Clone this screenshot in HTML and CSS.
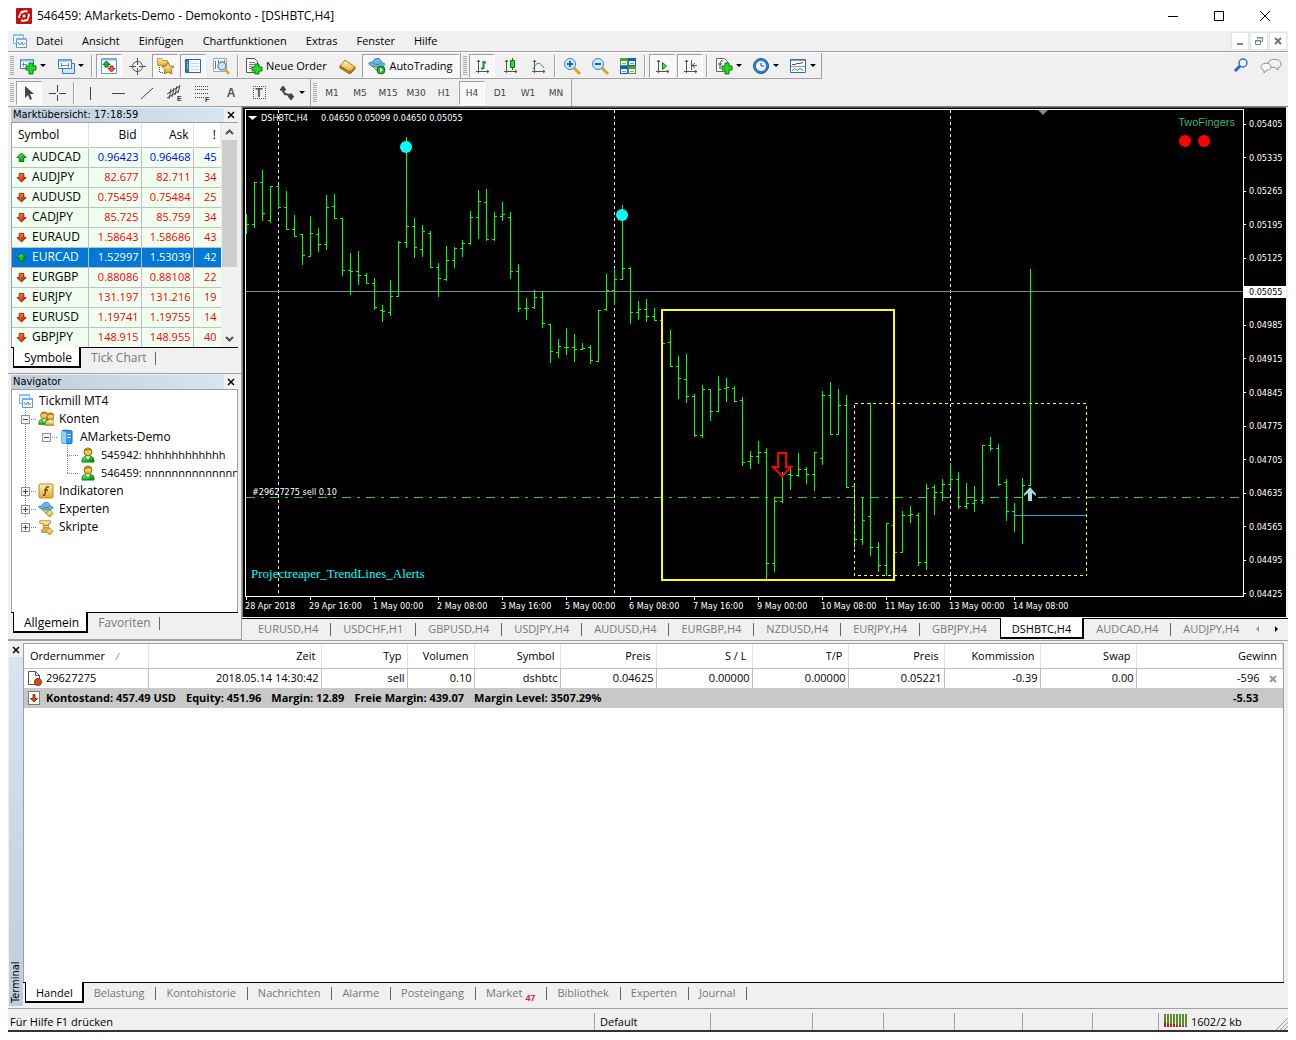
FILE: index.html
```html
<!DOCTYPE html>
<html lang="de">
<head>
<meta charset="utf-8">
<title>546459: AMarkets-Demo - Demokonto - [DSHBTC,H4]</title>
<link rel="stylesheet" href="styles.css">
</head>
<body>
<svg class="defs" width="0" height="0" aria-hidden="true">
  <defs>
    <linearGradient id="green" x1="0" y1="0" x2="1" y2="1"><stop offset="0" stop-color="#9f9"/><stop offset=".5" stop-color="#1fc41f"/><stop offset="1" stop-color="#067a06"/></linearGradient>
    <linearGradient id="red" x1="0" y1="0" x2="1" y2="1"><stop offset="0" stop-color="#ffb090"/><stop offset=".5" stop-color="#e8481c"/><stop offset="1" stop-color="#9c2404"/></linearGradient>
    <linearGradient id="gold" x1="0" y1="0" x2="0" y2="1"><stop offset="0" stop-color="#fff3b0"/><stop offset="1" stop-color="#e2a92e"/></linearGradient>
    <symbol id="up" viewBox="0 0 12 12"><path d="M6 1l5 5H8.500v4.500h-5V6H1z" fill="url(#green)" stroke="#0a6a1a"/></symbol>
    <symbol id="down" viewBox="0 0 12 12"><path d="M6 11l5-5H8.500V1.500h-5V6H1z" fill="url(#red)" stroke="#8c2408"/></symbol>
    <symbol id="axes" viewBox="0 0 18 18"><path d="M5.500 3v13M3 14.500h13M4 5l1.500-2L7 5M14 13l2 1.500-2 1.500" fill="none" stroke="#555"/></symbol>
    <symbol id="charts" viewBox="0 0 16 16"><path d="M1.500 1.500h10v9h-10z" fill="#eaf5ff" stroke="#7ab0e6"/><path d="M1 1h11v2H1z" fill="#8fc1ee"/><path d="M4.500 5.500h10v9h-10z" fill="#f8fcff" stroke="#5a9cdc"/><path d="M4 5h11v2H4z" fill="#77b2ea"/><path d="M6 9l2 3 2-3 1 3 2-2" fill="none" stroke="#4a8fd4"/></symbol>
    <symbol id="user" viewBox="0 0 16 16"><path d="M2 15c0-5 2-6 6-6s6 1 6 6z" fill="url(#green)" stroke="#127a12"/><path d="M6 9l2 4 2-4z" fill="#fff"/><circle cx="8" cy="5" r="4" fill="url(#gold)" stroke="#94690c"/><path d="M4 5c0-6 8-5 8 0-2-2-5-2-8 0z" fill="#b98817"/></symbol>
    <symbol id="gilt" viewBox="0 0 16 16"><path d="M2 15c0-5 2-6 6-6s6 1 6 6z" fill="url(#gold)" stroke="#94690c"/><path d="M6 9l2 4 2-4z" fill="#fff"/><circle cx="8" cy="5" r="4" fill="url(#gold)" stroke="#94690c"/><path d="M4 5c0-6 8-5 8 0-2-2-5-2-8 0z" fill="#b98817"/></symbol>
    <symbol id="hat" viewBox="0 0 18 18"><path d="M3 8l6 6 5-5z" fill="url(#gold)" stroke="#b78420"/><path d="M5 5c0-4 7-5 8-1l1 2c5 0 3 4-3 4C5 10 0 8 1 6c1-1 3 0 4-1z" fill="#6fb7e3" stroke="#3583b5"/><path d="M5 6c2 2 6 2 8 0" fill="none" stroke="#3583b5"/></symbol>
    <symbol id="star" viewBox="0 0 12 12"><path d="M6 0l2 4 4 .5-3 3 1 4.500-4-2-4 2 1-4.500-3-3L4 4z" fill="url(#gold)" stroke="#a66f08"/></symbol>
  </defs>
</svg>

<div class="app">
  <header class="titlebar">
    <svg width="16" height="16" viewBox="0 0 16 16"><rect width="16" height="16" rx="1" fill="#c80d12"/><path d="M5 3l6-1 3 5-2 6-6 1-4-5z" fill="#fff"/><path d="M5 6l4-2 3 3-1 4-4 1-3-3z" fill="#c80d12"/><path d="M1 12l4-3 1 3zM15 3l-4 4-1-3z" fill="#c80d12"/><circle cx="8" cy="8" r="1.500" fill="#fff"/></svg>
    <h1>546459: AMarkets-Demo - Demokonto - [DSHBTC,H4]</h1>
    <div class="winbtns">
      <button aria-label="Minimieren"><svg width="12" height="12"><path d="M1 6.500h10" stroke="#000"/></svg></button>
      <button aria-label="Maximieren"><svg width="12" height="12"><path d="M1.500 1.500h9v9h-9z" fill="none" stroke="#000"/></svg></button>
      <button aria-label="Schließen"><svg width="12" height="12"><path d="M1 1l10 10M11 1L1 11" stroke="#000"/></svg></button>
    </div>
  </header>

  <nav class="menubar">
    <svg width="16" height="16"><use href="#charts"/></svg>
    <button>Datei</button><button>Ansicht</button><button>Einfügen</button><button>Chartfunktionen</button><button>Extras</button><button>Fenster</button><button>Hilfe</button>
    <div class="mdi">
      <button aria-label="Chart minimieren"><svg width="10" height="10"><path d="M2 8h6" stroke="#71879b" stroke-width="2"/></svg></button>
      <button aria-label="Chart wiederherstellen"><svg width="10" height="10"><path d="M3.500 3V1.500h5v4H7M3 2h6" fill="none" stroke="#71879b"/><path d="M1.500 4.500h5v4h-5zM1 5h6" fill="none" stroke="#71879b"/></svg></button>
      <button aria-label="Chart schließen"><svg width="10" height="10"><path d="M2 2l6 6M8 2L2 8" stroke="#61788c" stroke-width="2"/></svg></button>
    </div>
  </nav>

  <div class="toolrow main-tools">
    <div class="band">
      <i class="grip"></i>
      <button class="drop first" aria-label="Neuer Chart"><svg width="18" height="18"><path d="M1.500 2.500h13v9h-13z" fill="#eef7ff" stroke="#3b7cc0"/><path d="M2 3.500h12" stroke="#8bbcec" stroke-width="2"/><path d="M3 7.500h5M4.500 5.500v4" stroke="#789"/><path d="M10 6h4v3h3v4h-3v4h-4v-4H7V9h3z" fill="#25d825" stroke="#0a7f12"/></svg></button>
      <button class="drop prof" aria-label="Profile"><svg width="18" height="18"><path d="M5.500 6.500h12v10h-12z" fill="#cfe6fb" stroke="#3b7cc0"/><path d="M1.500 2.500h13v9h-13z" fill="#f2f9ff" stroke="#3b7cc0"/><path d="M2 3.500h12" stroke="#7bb2ea" stroke-width="2"/><path d="M4 8.500h8M4.500 6v4M11.500 6v4" stroke="#789"/></svg></button>
      <i class="sep"></i>
      <button class="on" aria-label="Marktübersicht"><svg width="18" height="18"><path d="M1.500 1.500h15v15h-15z" fill="#fff" stroke="#5a9be0"/><path d="M2 2.500h14" stroke="#7db4f0" stroke-width="2"/><path d="M6.500 4l3.500 3.500H8V10H5V7.500H3z" fill="#25b825" stroke="#0a6a1a"/><path d="M11.500 15L8 11.500h2V9h3v2.500h2z" fill="#f0643c" stroke="#a02c08"/></svg></button>
      <button aria-label="Datenfenster"><svg width="18" height="18"><circle cx="9.500" cy="9.500" r="5" fill="none" stroke="#555"/><path d="M9.500 1v7M9.500 11v7M1 9.500h7M11 9.500h7" stroke="#555"/></svg></button>
      <button class="on" aria-label="Navigator"><svg width="18" height="18"><path d="M1.500 1.500h4l1 2h5v5h-10z" fill="url(#gold)" stroke="#c79a3a"/><path d="M3.500 10v6M4 15.500h4" stroke="#555" stroke-dasharray="1 1"/><svg x="6" y="5" width="12" height="12"><use href="#star"/></svg></svg></button>
      <button class="on" aria-label="Terminal"><svg width="18" height="18"><path d="M1.500 2.500h15v13h-15z" fill="#f6faff" stroke="#2d63b0"/><path d="M2 3h3v12H2z" fill="#2f6fc0"/><path d="M7 6.500h8M7 9.500h8M7 12.500h8" stroke="#c8d7e8"/><path d="M3.500 5v8" stroke="#cfe4fc" stroke-dasharray="1 1"/></svg></button>
      <button aria-label="Strategietester"><svg width="18" height="18"><path d="M1.500 1.500h13v13h-13z" fill="#f6f4ec" stroke="#9ab"/><path d="M3.500 4v8M6.500 3v6M12.500 3v5" stroke="#678"/><circle cx="10" cy="9" r="4" fill="#c8e7fb" stroke="#6495b8" stroke-width="1.500"/><path d="M13 12l4 5" stroke="#d9a424" stroke-width="2.500"/></svg></button>
      <i class="sep"></i>
      <button class="text order"><svg width="18" height="18"><path d="M1.500 1.500h8l3 3v11h-11z" fill="#fafafa" stroke="#555"/><path d="M4 5.500h6M4 7.500h5M4 9.500h3M4 11.500h2" stroke="#777"/><path d="M10 7h4v3h3v4h-3v3h-4v-3H7v-4h3z" fill="#25d825" stroke="#0a7f12"/></svg>Neue Order</button>
      <button aria-label="MetaEditor"><svg width="18" height="18"><path d="M2 9l5-6 10 7-5 6z" fill="url(#gold)" stroke="#b07810"/><path d="M2 9v2l10 6 5-5v-2l-5 5z" fill="#c98d1c" stroke="#8f5f09"/></svg></button>
      <button class="text auto on"><svg width="18" height="18"><use href="#hat"/><circle cx="13" cy="13" r="4" fill="#1fae35" stroke="#0b7a1c"/><path d="M12 10.500l3 2.500-3 2.500z" fill="#fff"/></svg>AutoTrading</button>
    </div>
    <div class="band">
      <i class="grip"></i>
      <button class="on" aria-label="Balkenchart"><svg width="18" height="18"><use href="#axes"/><path d="M10.500 4v8M8 11.500h2M11 5.500h2" stroke="#1c8c1c" stroke-width="2"/></svg></button>
      <button aria-label="Kerzenchart"><svg width="18" height="18"><use href="#axes"/><path d="M11.500 1v12" stroke="#0b7a0b"/><path d="M9.500 3.500h4v7h-4z" fill="#38d048" stroke="#0b7a0b"/></svg></button>
      <button aria-label="Linienchart"><svg width="18" height="18"><use href="#axes"/><path d="M4 12c4-7 6-8 11-1" fill="none" stroke="#2f9a3c"/></svg></button>
      <i class="sep"></i>
      <button aria-label="Vergrößern"><svg width="18" height="18"><path d="M11 11l6 6" stroke="#d6a520" stroke-width="3"/><circle cx="7" cy="7" r="5.500" fill="#cdeafd" stroke="#3f87c6"/><path d="M4 7h6M7 4v6" stroke="#2266b0" stroke-width="2"/></svg></button>
      <button aria-label="Verkleinern"><svg width="18" height="18"><path d="M11 11l6 6" stroke="#d6a520" stroke-width="3"/><circle cx="7" cy="7" r="5.500" fill="#cdeafd" stroke="#3f87c6"/><path d="M4 7h6" stroke="#2266b0" stroke-width="2"/></svg></button>
      <button aria-label="Fenster anordnen"><svg width="18" height="18"><path d="M1 1h8v8H1z" fill="#4fa516"/><path d="M9 1h8v8H9z" fill="#1f57c8"/><path d="M1 9h8v8H1z" fill="#1f57c8"/><path d="M9 9h8v8H9z" fill="#4fa516"/><path d="M2 4h6v4H2zM10 4h6v4h-6zM2 12h6v4H2zM10 12h6v4h-6z" fill="#e8f2ff"/><path d="M3 6.500h4M11 6.500h4M3 14.500h4M11 14.500h4" stroke="#7aa4d8"/></svg></button>
      <i class="sep"></i>
      <button class="on" aria-label="Autoscroll"><svg width="18" height="18"><use href="#axes"/><path d="M9.500 5.500l4 3.500-4 3.500z" fill="#4fd35c" stroke="#0b8a1b"/></svg></button>
      <button class="on" aria-label="Chart verschieben"><svg width="18" height="18"><use href="#axes"/><path d="M10.500 3v10" stroke="#1f62a8"/><path d="M11 8.500h5M14 6l-3 2.500 3 2.500" fill="none" stroke="#b03010"/></svg></button>
      <i class="sep"></i>
      <button class="drop" aria-label="Indikatoren"><svg width="18" height="18"><path d="M1.500 1.500h8l3 3v10h-11z" fill="#fafafa" stroke="#666"/><path d="M8 4c-3-1-3 2-3 8M3 7h4" fill="none" stroke="#444"/><path d="M10 6h4v3h3v4h-3v4h-4v-4H7V9h3z" fill="#25d825" stroke="#0a7f12"/></svg></button>
      <button class="drop" aria-label="Zeitrahmen"><svg width="18" height="18"><circle cx="9" cy="9" r="7.500" fill="#2e82d4" stroke="#1556a0"/><circle cx="9" cy="9" r="5" fill="#eef7ff"/><path d="M9 6v3h3" fill="none" stroke="#345"/></svg></button>
      <button class="drop" aria-label="Vorlagen"><svg width="18" height="18"><path d="M1.500 2.500h15v13h-15z" fill="#fff" stroke="#2f6db5"/><path d="M2 3.500h14M2 9.500h14" stroke="#6ba4e0"/><path d="M3 7.500h3l2-1h3l3-1" fill="none" stroke="#a03028"/><path d="M3 13.500l3-2 2 2 3-2 3 2" fill="none" stroke="#2a9a3a"/></svg></button>
    </div>
    <div class="corner">
      <button aria-label="Suche"><svg width="18" height="18"><circle cx="11" cy="6" r="4" fill="#eef5ff" stroke="#3a6fd8" stroke-width="1.500"/><path d="M8 9l-5 5" stroke="#2f62cf" stroke-width="3"/></svg></button>
      <button aria-label="Chat"><svg width="22" height="18"><path d="M8 6c1-5 13-5 13 1 0 2-1 3-3 3.500V13l-3-2.500c-3 0-7-1-7-4.500z" fill="#f4f4f6" stroke="#8d8d96"/><path d="M1 10c0-5 10-5 10 0 0 2-2 3-4 3l-3 3v-3c-2 0-3-1-3-3z" fill="#fafafc" stroke="#8d8d96"/></svg></button>
    </div>
  </div>

  <div class="toolrow line-tools">
    <div class="band">
      <i class="grip"></i>
      <button class="on" aria-label="Zeiger"><svg width="18" height="18"><path d="M5 2v12l3-3 2 5 2-1-2-5h4z" fill="#444"/></svg></button>
      <button aria-label="Fadenkreuz"><svg width="18" height="18"><path d="M9.500 1v7M9.500 11v6M1 9.500h7M11 9.500h7" stroke="#444"/></svg></button>
      <i class="sep"></i>
      <button aria-label="Vertikale Linie"><svg width="18" height="18"><path d="M8.500 3v13" stroke="#444"/></svg></button>
      <button aria-label="Horizontale Linie"><svg width="18" height="18"><path d="M2 9.500h13" stroke="#444"/></svg></button>
      <button aria-label="Trendlinie"><svg width="18" height="18"><path d="M3 15L15 4" stroke="#444"/></svg></button>
      <button aria-label="Kanal"><svg width="18" height="18"><path d="M1 10L14 2M1 14L13 7M5 5L3 15M8 4L6 13M11 2l-2 9M14 1l-2 8" stroke="#444"/><text x="11" y="17" class="mini">E</text></svg></button>
      <button aria-label="Fibonacci"><svg width="18" height="18"><path d="M1 2.500h14M1 5.500h14M1 9.500h14M1 13.500h9" stroke="#444" stroke-dasharray="1 1"/><text x="11" y="18" class="mini">F</text></svg></button>
      <button class="glyph" aria-label="Text">A</button>
      <button class="glyph boxed" aria-label="Textfeld"><span>T</span></button>
      <button class="drop" aria-label="Pfeile"><svg width="18" height="18"><path d="M2 6l3-4 3 4H6v1H4V6zM10 12l3 4 3-4h-2v-2h-2v2z" fill="#444" stroke="#444"/><path d="M5 7l2 3 5 1" fill="none" stroke="#444" stroke-width="2"/></svg></button>
    </div>
    <div class="band periods">
      <i class="grip"></i>
      <button>M1</button><button>M5</button><button>M15</button><button>M30</button><button>H1</button><button class="on">H4</button><button>D1</button><button>W1</button><button>MN</button>
    </div>
  </div>

  <main class="workspace">
    <aside class="side">
      <section class="panel">
        <div class="cap"><h2>Marktübersicht: 17:18:59</h2><button class="x" aria-label="Marktübersicht schließen"><svg width="8" height="8"><path d="M1 1l6 6M7 1L1 7" stroke="#000" stroke-width="1.500"/></svg></button></div>
        <div class="quotes">
          <table>
            <colgroup><col class="c-sym"><col class="c-bid"><col class="c-ask"><col></colgroup>
            <thead><tr><th>Symbol</th><th>Bid</th><th>Ask</th><th>!</th></tr></thead>
            <tbody>
              <tr class="rise"><td><svg><use href="#up"/></svg>AUDCAD</td><td>0.96423</td><td>0.96468</td><td>45</td></tr>
              <tr><td><svg><use href="#down"/></svg>AUDJPY</td><td>82.677</td><td>82.711</td><td>34</td></tr>
              <tr><td><svg><use href="#down"/></svg>AUDUSD</td><td>0.75459</td><td>0.75484</td><td>25</td></tr>
              <tr><td><svg><use href="#down"/></svg>CADJPY</td><td>85.725</td><td>85.759</td><td>34</td></tr>
              <tr><td><svg><use href="#down"/></svg>EURAUD</td><td>1.58643</td><td>1.58686</td><td>43</td></tr>
              <tr class="sel"><td><svg><use href="#up"/></svg>EURCAD</td><td>1.52997</td><td>1.53039</td><td>42</td></tr>
              <tr><td><svg><use href="#down"/></svg>EURGBP</td><td>0.88086</td><td>0.88108</td><td>22</td></tr>
              <tr><td><svg><use href="#down"/></svg>EURJPY</td><td>131.197</td><td>131.216</td><td>19</td></tr>
              <tr><td><svg><use href="#down"/></svg>EURUSD</td><td>1.19741</td><td>1.19755</td><td>14</td></tr>
              <tr><td><svg><use href="#down"/></svg>GBPJPY</td><td>148.915</td><td>148.955</td><td>40</td></tr>
            </tbody>
          </table>
          <div class="scroll">
            <button aria-label="Nach oben"><svg width="9" height="6"><path d="M1 5l3.500-3.500L8 5" fill="none" stroke="#505050" stroke-width="2"/></svg></button>
            <i></i>
            <button aria-label="Nach unten"><svg width="9" height="6"><path d="M1 1l3.500 3.500L8 1" fill="none" stroke="#505050" stroke-width="2"/></svg></button>
          </div>
        </div>
        <div class="tabs"><button class="active">Symbole</button><button>Tick Chart</button></div>
      </section>

      <section class="panel nav">
        <div class="cap"><h2>Navigator</h2><button class="x" aria-label="Navigator schließen"><svg width="8" height="8"><path d="M1 1l6 6M7 1L1 7" stroke="#000" stroke-width="1.500"/></svg></button></div>
        <ul class="tree">
          <li class="l0"><svg><use href="#charts"/></svg>Tickmill MT4</li>
          <li class="l1"><b class="minus"></b><svg viewBox="0 0 18 18"><svg x="-1" width="13" height="17"><use href="#user"/></svg><svg x="6" y="1" width="13" height="17"><use href="#gilt"/></svg></svg>Konten</li>
          <li class="l2"><b class="minus"></b><svg viewBox="0 0 16 16"><path d="M3 2l3-1 7 1v12l-3 1-7-1z" fill="#2f9be8" stroke="#1468b4"/><path d="M3 2l4 1v12l-4-1z" fill="#8fd0ff"/><path d="M8 5.500h4M8 8.500h4" stroke="#fff"/></svg>AMarkets-Demo</li>
          <li class="l3"><i></i><svg><use href="#user"/></svg>545942: hhhhhhhhhhhh</li>
          <li class="l3 last"><i></i><svg><use href="#user"/></svg>546459: nnnnnnnnnnnnnn</li>
          <li class="l1"><b></b><svg viewBox="0 0 16 16"><rect x="1" y="1" width="14" height="14" rx="1" fill="url(#gold)" stroke="#b38a28"/><path d="M11 4c-3-1-3 1-3.500 4S7 13 5 12M6 7h4" fill="none" stroke="#6b4d0c" stroke-width="1.500"/></svg>Indikatoren</li>
          <li class="l1"><b></b><svg viewBox="0 0 18 18"><use href="#hat"/><path d="M13 10l4 4-4 4-4-4z" fill="url(#gold)" stroke="#a87a14"/></svg>Experten</li>
          <li class="l1 end"><b></b><svg viewBox="0 0 18 18"><path d="M2 2h12v3h-2v7h2v3H4v-3h2V5H2z" fill="url(#gold)" stroke="#b38a28"/><path d="M7 7h4M7 10h4" stroke="#8a6a1c"/><path d="M13 10l4 4-4 4-4-4z" fill="url(#gold)" stroke="#a87a14"/></svg>Skripte</li>
        </ul>
        <div class="tabs"><button class="active">Allgemein</button><button>Favoriten</button></div>
      </section>
    </aside>

    <section class="charts">
      <div class="chart">
        <div class="plot">
          <svg class="canvas">
            <g transform="translate(-246 -110)">
              <path class="day" d="M278.500 110V596M614.500 110V596M950.500 110V596"/>
              <path class="bid" d="M246 291.500H4000"/>
              <path class="trade" d="M246 497.500H4000"/>
              <path class="bars" id="bars"/>
              <path class="zone" d="M854.500 403.500H1086.500V575.500H854.500Z"/>
              <rect class="box" x="662" y="310" width="232" height="270"/>
              <path d="M1014 515.500H1086" stroke="#1ca5dc"/>
              <path class="sell" d="M778 453h8v14h5l-9 9-9-9h5z"/>
              <path d="M1030 487l6 7v2l-4-3v8h-4v-8l-4 3v-2z" fill="#add8e6"/>
              <circle cx="406" cy="147" r="6" fill="#0ff"/>
              <circle cx="622" cy="215" r="6" fill="#0ff"/>
              <path d="M1038 110h10l-5 5z" fill="#778899"/>
              <path d="M248 116h9l-4.500 4z" fill="#fff"/>
              <text x="261" y="121">DSHBTC,H4</text>
              <text x="321" y="121">0.04650 0.05099 0.04650 0.05055</text>
              <text x="252" y="495">#29627275 sell 0.10</text>
              <text class="note" x="251" y="578">Projectreaper_TrendLines_Alerts</text>
            </g>
          </svg>
          <div class="fingers">TwoFingers<span><i></i><i></i></span></div>
        </div>
        <ol class="prices">
          <li>0.05405</li><li>0.05335</li><li>0.05265</li><li>0.05195</li><li>0.05125</li><li class="now">0.05055</li><li>0.04985</li><li>0.04915</li><li>0.04845</li><li>0.04775</li><li>0.04705</li><li>0.04635</li><li>0.04565</li><li>0.04495</li><li>0.04425</li>
        </ol>
        <ol class="times">
          <li>28 Apr 2018</li><li>29 Apr 16:00</li><li>1 May 00:00</li><li>2 May 08:00</li><li>3 May 16:00</li><li>5 May 00:00</li><li>6 May 08:00</li><li>7 May 16:00</li><li>9 May 00:00</li><li>10 May 08:00</li><li>11 May 16:00</li><li>13 May 00:00</li><li>14 May 08:00</li>
        </ol>
      </div>
      <div class="tabs charttabs">
        <button>EURUSD,H4</button><button>USDCHF,H1</button><button>GBPUSD,H4</button><button>USDJPY,H4</button><button>AUDUSD,H4</button><button>EURGBP,H4</button><button>NZDUSD,H4</button><button>EURJPY,H4</button><button class="end">GBPJPY,H4</button><button class="active">DSHBTC,H4</button><button>AUDCAD,H4</button><button class="end">AUDJPY,H4</button>
        <span class="arrows"><button aria-label="Zurück"><svg width="5" height="8"><path d="M4 1v6L1 4z" fill="#999"/></svg></button><button aria-label="Weiter"><svg width="5" height="8"><path d="M1 1v6l3-3z"/></svg></button></span>
      </div>
    </section>
  </main>

  <section class="terminal">
    <div class="strip">
      <button class="x" aria-label="Terminal schließen"><svg width="8" height="8"><path d="M1 1l6 6M7 1L1 7" stroke="#000" stroke-width="1.500"/></svg></button>
      <h2>Terminal</h2>
    </div>
    <div class="pane">
      <table class="orders">
        <colgroup><col class="w124"><col class="w173"><col class="w86"><col class="w67"><col class="w86"><col class="w96"><col class="w96"><col class="w96"><col class="w96"><col class="w96"><col class="w96"><col></colgroup>
        <thead><tr><th>Ordernummer <em>/</em></th><th>Zeit</th><th>Typ</th><th>Volumen</th><th>Symbol</th><th>Preis</th><th>S / L</th><th>T/P</th><th>Preis</th><th>Kommission</th><th>Swap</th><th>Gewinn</th></tr></thead>
        <tbody>
          <tr><td><svg width="16" height="16"><path d="M2.500 1.500h7l4 4v9h-11z" fill="#fff" stroke="#555"/><path d="M9.500 1.500v4h4" fill="none" stroke="#555"/><circle cx="12" cy="12" r="3.500" fill="#e0481c" stroke="#a02c08"/></svg>29627275</td><td>2018.05.14 14:30:42</td><td>sell</td><td>0.10</td><td>dshbtc</td><td>0.04625</td><td>0.00000</td><td>0.00000</td><td>0.05221</td><td>-0.39</td><td>0.00</td><td>-596<button aria-label="Order schließen"><svg width="8" height="8"><path d="M1 1l6 6M7 1L1 7" stroke="#999" stroke-width="2"/></svg></button></td></tr>
          <tr class="sum"><td colspan="11"><svg width="16" height="16"><path d="M2.500 1.500h11v13h-11z" fill="#fff" stroke="#777"/><path d="M8 12L4.500 8.500H7V4.500h2v4h2.500z" fill="#e8481c" stroke="#a02c08"/></svg><span>Kontostand: 457.49 USD</span><span>Equity: 451.96</span><span>Margin: 12.89</span><span>Freie Margin: 439.07</span><span>Margin Level: 3507.29%</span></td><td>-5.53</td></tr>
        </tbody>
      </table>
      <div class="tabs"><button class="active">Handel</button><button>Belastung</button><button>Kontohistorie</button><button>Nachrichten</button><button>Alarme</button><button>Posteingang</button><button>Market<sub>47</sub></button><button>Bibliothek</button><button>Experten</button><button>Journal</button></div>
    </div>
  </section>

  <footer class="status">
    <span class="hint">Für Hilfe F1 drücken</span>
    <span class="s116">Default</span><span class="s102"></span><span class="s71"></span><span class="s71"></span><span class="s68"></span><span class="s70"></span><span class="s66"></span>
    <span class="net"><svg width="24" height="14"><path d="M1 0v8M4 0v9M7 0v10M10 0v10M13 0v11M16 0v11M19 0v12M22 0v12" stroke="#5a8a2a" stroke-width="2"/><path d="M1 8v5M4 9v4M7 10v3M10 10v3M13 11v2M16 11v2M19 12v1M22 12v1" stroke="#a52a1a" stroke-width="2"/></svg>1602/2 kb<svg class="sizer" width="13" height="13"><path d="M1 13L13 1M5 13l8-8M9 13l4-4" stroke="#999"/></svg></span>
  </footer>
</div>
<script src="chart.js"></script>
</body>
</html>
```
FILE: styles.css
```css
* { box-sizing: border-box; }
body { margin: 0; background: #fff; color: #000; font: 12px/16px "Open Sans", "Noto Sans", sans-serif; }
button { margin: 0; padding: 0; border: 0; background: none; color: inherit; font: inherit; display: flex; align-items: center; justify-content: center; flex: none; }
h1, h2 { margin: 0; font-weight: normal; }
ol, ul { margin: 0; padding: 0; list-style: none; }
svg { flex: none; }
.defs { position: absolute; }
.app { display: flex; flex-direction: column; min-height: 100vh; padding: 0 8px 8px; }

/* Title and menu */
.titlebar { display: flex; align-items: center; gap: 5px; height: 31px; padding-left: 8px; }
.titlebar h1 { font-size: 12px; flex: 1; white-space: nowrap; }
.winbtns { display: flex; }
.winbtns button { width: 46px; height: 30px; }
.menubar { display: flex; align-items: center; gap: 1px; height: 21px; padding-left: 4px; background: #f0f0f0; border-bottom: 1px solid #a0a0a0; font-size: 11px; }
.menubar > svg { margin-right: -2px; }
.menubar > button { padding: 0 9px; }
.mdi { display: flex; gap: 1px; margin-left: auto; padding-right: 1px; }
.mdi button { width: 18px; height: 18px; background: #fff; border: 1px solid #e3e3e3; }

/* Toolbars */
.toolrow { display: flex; background: #f0f0f0; }
.main-tools { height: 27px; border-top: 1px solid #fff; }
.line-tools { height: 27px; }
.band { display: flex; align-items: center; gap: 2px; padding: 0 1px 0 2px; border-right: 1px solid #a0a0a0; border-bottom: 1px solid #a0a0a0; }
.line-tools .band { border-bottom: 0; }
.band button { width: 26px; height: 24px; }
.grip { width: 4px; height: 20px; background: repeating-linear-gradient(#aaa 0 1px, #f0f0f0 1px 2px); }
.sep { width: 4px; height: 22px; background: linear-gradient(90deg, transparent 1px, #a0a0a0 1px 2px, #fff 2px 3px, transparent 3px); }
.band .on { background: #f8f8f8; border: 1px solid #a0a0a0; border-right-color: #fff; border-bottom-color: #fff; }
.band .drop { width: 35px; gap: 3px; }
.drop::after { content: ""; border: 3px solid transparent; border-top-color: #000; border-bottom: 0; }
.main-tools .first { padding-right: 3px; }
.band .text { gap: 3px; white-space: nowrap; font-size: 11px; }
.band .order { width: 90px; justify-content: flex-start; padding-left: 3px; }
.band .auto { width: 97px; }
.corner { display: flex; gap: 10px; align-items: center; margin-left: auto; padding-right: 6px; }
.mini { font: bold 7px "Liberation Sans", sans-serif; fill: #333; }
.glyph { font: bold 12px "Liberation Sans", sans-serif; color: #555; }
.boxed span { width: 13px; height: 13px; line-height: 12px; border: 1px dotted #555; }
.periods { font: 9px/12px "DejaVu Sans", sans-serif; color: #444; padding-right: 2px; }

/* Docked panels */
.workspace { display: grid; grid-template-columns: 234px minmax(0, 1fr); background: #f0f0f0; }
.side { display: flex; flex-direction: column; border-top: 1px solid #a0a0a0; border-right: 1px solid #a0a0a0; }
.panel { display: flex; flex-direction: column; padding: 1px 3px 4px; border-bottom: 1px solid #a0a0a0; }
.nav { flex: 1; padding-bottom: 3px; }
.cap { display: flex; align-items: center; height: 14px; }
.cap h2, .strip h2 { font: 11px/14px "DejaVu Sans Condensed", "DejaVu Sans", sans-serif; }
.cap h2 { flex: 1; padding-left: 2px; background: linear-gradient(90deg, #bfcddb, #d7e4f2); }
.x { width: 14px; height: 14px; }
.quotes { display: flex; border: 1px solid #a0a0a0; border-bottom: 0; border-right: 0; }
.quotes table { flex: 1; border-collapse: collapse; table-layout: fixed; font-size: 11px; background: #fff; }
.c-sym { width: 76px; }
.c-bid { width: 53px; }
.c-ask { width: 52px; }
.quotes th { height: 24px; padding: 0 4px 0 6px; font-size: 12px; font-weight: normal; text-align: right; border-right: 1px solid #e3e3e3; }
.quotes th:first-child { text-align: left; }
.quotes td { height: 20px; padding: 0 2px; text-align: right; color: #f00; background: #f0fff0; border-right: 1px solid #c0c0c0; border-top: 1px solid #c0c0c0; }
.quotes td:last-child { border-right: 0; padding-right: 4px; }
.quotes td:first-child { text-align: left; color: #000; font-size: 12px; padding-left: 4px; }
.quotes td svg { width: 11px; height: 11px; margin-right: 5px; vertical-align: -2px; }
.quotes .rise td { color: #00f; }
.quotes .rise td:first-child { color: #000; }
.quotes .sel td, .quotes .sel td:first-child { background: #0078d7; color: #fff; }
.scroll { width: 17px; display: flex; flex-direction: column; }
.scroll button { width: 17px; height: 17px; }
.scroll i { width: 15px; height: 127px; margin: 0 auto auto; background: #cdcdcd; }

/* Tabs under a panel */
.tabs { display: flex; height: 22px; padding-left: 2px; border-top: 1px solid #000; color: #777; white-space: nowrap; }
.nav .tabs, .pane .tabs { height: 24px; }
.tabs button { height: 20px; padding: 0 10px; }
.tabs > button:not(.active) { gap: 8px; }
.tabs > button:not(.active)::after { content: ""; width: 1px; height: 13px; margin-right: -10px; background: #666; }
.tabs .active { height: 21px; margin-top: -1px; padding: 2px 7px 0 10px; background: #fff; color: #000; border: solid #000; border-width: 0 2px 2px 1px; }

.tree { flex: 1; padding: 2px 0 0 6px; background: #fff; border: 1px solid #a0a0a0; border-bottom: 0; overflow: hidden; }
.tree li { display: flex; align-items: center; height: 18px; white-space: nowrap; }
.tree li svg { width: 16px; height: 16px; margin-right: 5px; }
.tree b { flex: none; width: 9px; height: 9px; margin-right: 8px; background: linear-gradient(#2b4f9c, #2b4f9c) center / 5px 1px no-repeat, linear-gradient(#2b4f9c, #2b4f9c) center / 1px 5px no-repeat, #f4f4f4; border: 1px solid #919191; }
.tree b::after { content: ""; display: block; width: 6px; height: 1px; margin: 3px 0 0 9px; background: repeating-linear-gradient(90deg, #888 0 1px, transparent 1px 2px); }
.tree .minus { background: linear-gradient(#2b4f9c, #2b4f9c) center / 5px 1px no-repeat, #f4f4f4; }
.tree .l1 { padding-left: 3px; background: linear-gradient(90deg, transparent 12px, #fff 12px), repeating-linear-gradient(#888 0 1px, transparent 1px 2px) 7px 0 / 1px 100% no-repeat; }
.tree .l2, .tree .l3 { background: repeating-linear-gradient(#888 0 1px, transparent 1px 2px) 7px 0 / 1px 100% no-repeat; }
.tree .end { background: none; }
.tree .l2 { padding-left: 24px; }
.tree .l3 { padding-left: 49px; font-size: 11px; }
.tree .l3 i { flex: none; width: 11px; height: 18px; margin-right: 2px; background: repeating-linear-gradient(#888 0 1px, transparent 1px 2px) 0 0 / 1px 100% no-repeat, repeating-linear-gradient(90deg, #888 0 1px, transparent 1px 2px) 0 9px / 100% 1px no-repeat; }
.tree .last i { background-size: 1px 9px, 100% 1px; }

/* Chart */
.charts { display: flex; flex-direction: column; border-top: 1px solid #808080; }
.chart { display: grid; grid-template-columns: minmax(0, 1fr) 42px; grid-template-rows: 488px 20px; margin: 0 2px 1px 0; padding: 1px 0 0 2px; background: #000; color: #fff; border-top: 1px solid #555; border-left: 1px solid #808080; font: 9px/12px "DejaVu Sans Condensed", "DejaVu Sans", sans-serif; }
.plot { position: relative; border: 1px solid #fff; overflow: hidden; }
.canvas { display: block; width: 100%; height: 100%; }
.canvas path { fill: none; }
.canvas path[fill] { fill: revert-layer; }
.canvas text { fill: #fff; }
.canvas .note { fill: #0ff; font: 13px "Liberation Serif", serif; }
.day, .bid, .trade, .bars, .zone, .box { shape-rendering: crispEdges; }
.day { stroke: #fff; stroke-dasharray: 3 3; }
.bid { stroke: #778899; }
.trade { stroke: #32cd32; stroke-dasharray: 9 6 3 6; }
.bars { stroke: #0f0; }
.zone { stroke: #ff0; stroke-dasharray: 3 3; }
.box { fill: none; stroke: #ff0; stroke-width: 2; }
.sell { stroke: #f00; stroke-width: 2; }
.fingers { position: absolute; top: 5px; right: 8px; color: #3cb371; font: 11px/14px "Liberation Sans", sans-serif; }
.fingers span { display: flex; gap: 7px; padding: 6px 0 0 1px; }
.fingers i { width: 12px; height: 12px; border-radius: 50%; background: #f00; }
.prices { display: flex; flex-direction: column; justify-content: space-between; padding: 9px 0 0; height: 491px; }
.prices li { display: flex; align-items: center; height: 12px; }
.prices li::before { content: ""; width: 2px; height: 1px; margin-right: 3px; background: #fff; }
.prices .now { background: #fff; color: #000; }
.times { grid-column: 1 / -1; display: grid; grid-auto-flow: column; grid-auto-columns: 64px; overflow: hidden; }
.times li { white-space: nowrap; }
.times li::before { content: ""; display: block; width: 1px; height: 3px; margin-left: 1px; background: #fff; }
.charttabs { padding-left: 4px; font-size: 11px; }
.charttabs > button { padding: 0 12px; }
.charttabs > button:not(.active) { gap: 12px; }
.charttabs > button:not(.active)::after { margin-right: -12px; }
.charttabs > .end:not(.active)::after { visibility: hidden; }
.charttabs > .active { padding: 2px 11px 0; }
.arrows { display: flex; gap: 14px; margin-left: auto; padding-right: 9px; }
.tabs .arrows button { padding: 0; color: #000; }

/* Terminal */
.terminal { display: flex; flex: 1; padding: 2px 4px 2px 0; background: #f0f0f0; border-top: 1px solid #a0a0a0; }
.strip { display: flex; flex-direction: column; align-items: center; width: 15px; }
.strip h2 { flex: 1; width: 14px; padding-top: 3px; writing-mode: vertical-rl; transform: rotate(180deg); background: linear-gradient(#bfcddb, #d7e4f2); }
.pane { flex: 1; display: flex; flex-direction: column; justify-content: space-between; border: 1px solid #a0a0a0; border-bottom: 0; background: #fff; min-width: 0; font-size: 11px; }
.orders { width: 100%; border-collapse: collapse; table-layout: fixed; font-size: 11px; }
.w124 { width: 124px; } .w173 { width: 173px; } .w86 { width: 86px; } .w67 { width: 67px; } .w96 { width: 96px; }
.orders th { height: 24px; padding: 1px 5px 0 6px; font-weight: normal; text-align: right; border-right: 1px solid #e3e3e3; border-bottom: 1px solid #c0c0c0; }
.orders th em { margin-left: 8px; font-size: 9px; color: #777; }
.orders td { height: 20px; padding: 0 2px; text-align: right; border-right: 1px solid #c0c0c0; }
.orders tr > :first-child { text-align: left; white-space: nowrap; }
.orders td > svg { margin-right: 4px; vertical-align: -4px; }
.orders td:last-child { border-right: 0; padding-right: 6px; }
.orders td button { display: inline-flex; width: 8px; height: 8px; margin-left: 9px; vertical-align: -1px; }
.orders .sum td { background: #c8c8c8; font-weight: bold; border: 0; }
.orders .sum td:last-child { padding-right: 24px; }
.sum span { margin-right: 10px; }
.pane .tabs { background: #f0f0f0; margin: 0 -1px; }
.pane .tabs > button:not(.active) { gap: 11px; }
.pane .tabs .active { padding: 2px 9px 0 10px; }
.tabs sub { align-self: flex-end; margin-left: -8px; color: #e02020; font: bold 9px/9px "Liberation Sans", sans-serif; }

/* Status bar */
.status { display: flex; align-items: center; height: 24px; background: #f0f0f0; border-top: 1px solid #a0a0a0; border-bottom: 2px solid #333; font-size: 11px; line-height: 17px; padding-top: 3px; }
.status > span { height: 17px; }
.hint { flex: 1; padding-left: 2px; }
.status span:not(.hint) { padding-left: 5px; border-left: 1px solid #a0a0a0; }
.s116 { width: 116px; } .s102 { width: 102px; } .s71 { width: 71px; } .s68 { width: 68px; } .s70 { width: 70px; } .s66 { width: 66px; }
.net { display: flex; align-items: center; gap: 3px; width: 130px; }
.sizer { margin-left: auto; align-self: flex-end; }
```
FILE: chart.js
```js
// One row per four-hour bar: open, high, low, close, as heights on the plot.
const series = [
  [224,214,234,224],[224,182,228,182],[182,170,221,213],[220,186,223,186],[186,185,209,207],
  [207,191,230,229],[229,215,237,236],[234,234,265,255],[256,216,257,233],[234,228,252,244],
  [244,195,250,207],[206,194,219,218],[218,218,276,270],[270,253,295,271],[271,251,285,275],
  [275,273,284,283],[283,278,310,307],[310,305,322,311],[312,280,316,296],[296,241,297,242],
  [242,137,248,226],[226,218,258,247],[249,225,257,231],[233,231,268,267],[267,263,297,278],
  [279,246,281,260],[260,247,268,248],[248,240,257,243],[243,211,245,217],[217,190,239,201],
  [202,189,241,239],[239,212,241,216],[216,202,221,214],[217,212,279,271],[271,264,312,308],
  [308,298,320,308],[307,290,309,297],[297,292,328,323],[324,324,363,351],[352,339,358,346],
  [347,328,355,347],[347,334,362,349],[349,343,350,348],[347,345,364,360],[361,310,362,310],
  [309,274,311,290],[290,268,305,279],[279,205,280,268],[268,267,324,312],[312,301,320,309],
  [309,299,322,316],[316,308,321,320],[320,320,344,343],[342,330,367,366],[366,356,399,378],
  [379,354,403,396],[396,394,437,435],[435,385,438,389],[389,389,421,411],[411,376,412,389],
  [388,378,402,387],[388,386,402,401],[400,397,466,462],[461,451,469,456],[456,441,464,452],
  [452,448,580,563],[563,497,572,501],[501,472,503,474],[474,466,490,475],[475,453,477,469],
  [469,467,484,474],[474,452,491,452],[458,391,465,395],[395,382,435,434],[434,389,435,405],
  [405,395,488,487],[486,483,548,539],[539,497,545,520],[516,403,556,547],[547,542,572,565],
  [565,523,576,523],[525,525,553,552],[552,511,553,515],[515,506,523,514],[515,513,566,562],
  [562,484,570,488],[487,485,515,492],[492,479,501,484],[484,463,488,479],[479,472,509,506],
  [506,483,509,503],[503,486,512,500],[500,445,504,445],[445,437,451,448],[448,444,486,484],
  [482,479,521,511],[511,503,532,515],[515,478,544,485],[485,269,486,291]
];
const step = 8;
const left = 246;
document.getElementById("bars").setAttribute("d", series.map(([open, high, low, close], i) => {
  const x = left + i * step;
  return `M${x + 0.5} ${high}V${low}M${x - 2} ${open + 0.5}H${x}M${x + 1} ${close + 0.5}H${x + 3}`;
}).join(""));
```
